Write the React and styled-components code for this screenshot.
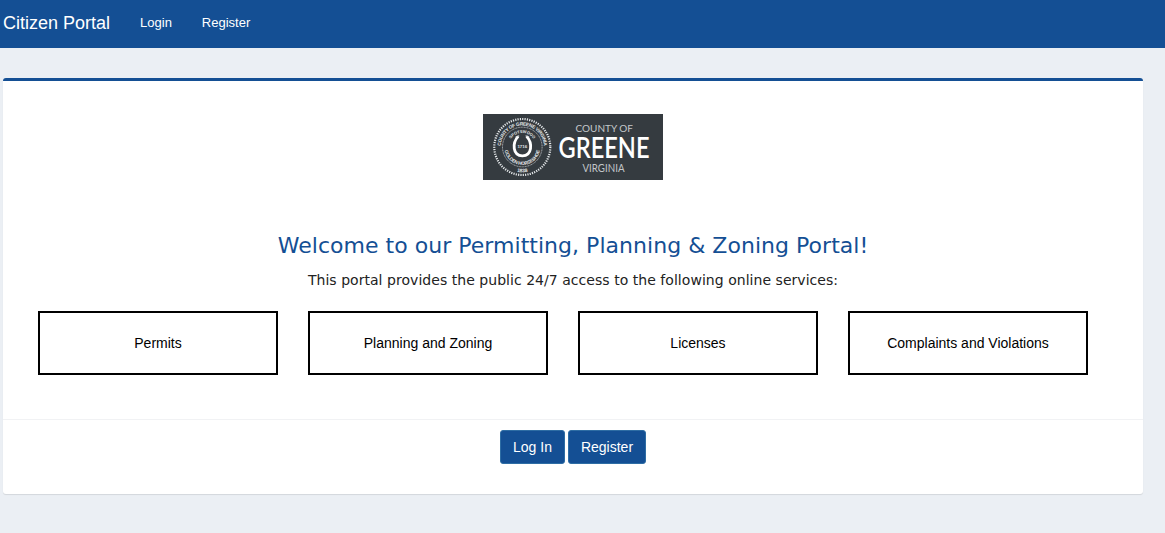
import React from "react";
import styled, { createGlobalStyle } from "styled-components";

const GlobalStyle = createGlobalStyle`
  *, *::before, *::after {
    box-sizing: border-box;
  }
  body {
    margin: 0;
    min-height: 100vh;
    background: #ebeff4;
    color: #000;
    font-family: "Liberation Sans", Arial, sans-serif;
    font-size: 14px;
    line-height: 20px;
  }
`;

const Navbar = styled.nav`
  display: flex;
  align-items: center;
  gap: 30px;
  height: 48px;
  padding: 0 3px 3px;
  background: #144f94;
`;

const Brand = styled.a`
  color: #fff;
  font-size: 18px;
  text-decoration: none;
  white-space: nowrap;
`;

const NavLink = styled.a`
  color: #fff;
  font-size: 13px;
  text-decoration: none;
`;

const Card = styled.main`
  width: 1140px;
  height: 416px;
  margin: 30px 0 0 3px;
  border-top: 3px solid #144f94;
  border-radius: 3px;
  background: #fff;
  box-shadow: 0 1px 1px rgba(0, 0, 0, 0.1);
`;

const CardBody = styled.div`
  display: flex;
  flex-direction: column;
  align-items: center;
  height: 338px;
  padding-top: 33px;
`;

const Logo = styled.svg`
  display: block;
  flex: none;
  width: 180px;
  height: 66px;
  background: #353b40;
`;

const Heading = styled.h1`
  margin: 51px 0 0;
  color: #144f94;
  font-family: Verdana, "DejaVu Sans", sans-serif;
  font-size: 22px;
  font-weight: 400;
  line-height: 30px;
  letter-spacing: 0.03px;
  white-space: nowrap;
`;

const Intro = styled.p`
  margin: 9px 0 0;
  color: #222;
  font-family: Verdana, "DejaVu Sans", sans-serif;
  font-size: 14px;
  letter-spacing: 0.04px;
  white-space: nowrap;
`;

const Services = styled.div`
  display: grid;
  grid-template-columns: repeat(4, 240px);
  gap: 30px;
  align-self: flex-start;
  margin: 21px 0 0 35px;
`;

const Service = styled.div`
  display: flex;
  justify-content: center;
  align-items: center;
  height: 64px;
  border: 2px solid #000;
`;

const CardFooter = styled.footer`
  display: flex;
  justify-content: center;
  gap: 3px;
  padding: 10px 0;
  border-top: 1px solid #f1f2f4;
`;

const Button = styled.button`
  width: ${(props) => props.$width};
  height: 34px;
  padding: 0;
  border: 1px solid #2e6da4;
  border-radius: 3px;
  background: #144f94;
  color: #fff;
  font-family: inherit;
  font-size: 14px;
`;

const services = [
  "Permits",
  "Planning and Zoning",
  "Licenses",
  "Complaints and Violations",
];

const CountyLogo = () => (
  <Logo viewBox="0 0 180 66" role="img" aria-label="County of Greene Virginia">
    <defs>
      <path id="outerTop" d="M17.8 33 A21.5 21.5 0 0 1 60.8 33" />
      <path id="outerBottom" d="M14 33 A25.3 25.3 0 0 0 64.6 33" />
      <path id="innerTop" d="M25.3 33 A14 14 0 0 1 53.3 33" />
      <path id="innerBottom" d="M21.3 33 A18 18 0 0 0 57.3 33" />
    </defs>
    <g fill="none" stroke="#e4e7e9">
      <circle cx="39.3" cy="33" r="28" strokeWidth="2.2" strokeDasharray="1.2 1.15" />
      <circle cx="39.3" cy="33" r="19.8" strokeWidth="0.7" strokeDasharray="1 0.6" />
      <path
        d="M35.2 22.4 C29 29 29.5 41.8 39.4 41.8 C49.3 41.8 49.8 29 43.6 22.4"
        stroke="#fff"
        strokeWidth="2.8"
      />
      <path d="M32.6 23.2 L36.2 21.8 M42.6 21.8 L46.2 23.2" strokeWidth="1.2" />
    </g>
    <g fill="#e4e7e9" fontFamily="Liberation Sans, sans-serif" fontWeight="700" textAnchor="middle">
      <text fontSize="4.8">
        <textPath href="#outerTop" startOffset="50%" textLength="65">COUNTY OF GREENE VIRGINIA</textPath>
      </text>
      <text fontSize="4">
        <textPath href="#innerTop" startOffset="50%">SPOTSWOOD</textPath>
      </text>
      <text fontSize="4.8">
        <textPath href="#innerBottom" startOffset="50%" textLength="49">GOLDEN HORSESHOE</textPath>
      </text>
      <text fontSize="5">
        <textPath href="#outerBottom" startOffset="50%">1838</textPath>
      </text>
      <text x="39.3" y="34.4" fontSize="4.4">1716</text>
    </g>
    <g fontFamily="Lato, sans-serif">
      <text x="92.5" y="17.8" fontSize="10.3" fill="#c3c7ca" textLength="57.5" lengthAdjust="spacingAndGlyphs">COUNTY OF</text>
      <text x="75.5" y="43.8" fontSize="27.8" fontWeight="600" fill="#fff" textLength="91" lengthAdjust="spacingAndGlyphs">GREENE</text>
      <text x="99.5" y="57.8" fontSize="10.8" fill="#c3c7ca" textLength="42" lengthAdjust="spacingAndGlyphs">VIRGINIA</text>
    </g>
  </Logo>
);

const App = () => {
  return (
    <>
      <GlobalStyle />
      <Navbar>
        <Brand href="#">Citizen Portal</Brand>
        <NavLink href="#">Login</NavLink>
        <NavLink href="#">Register</NavLink>
      </Navbar>
      <Card>
        <CardBody>
          <CountyLogo />
          <Heading>
            Welcome to our Permitting, Planning &amp; Zoning Portal!
          </Heading>
          <Intro>
            This portal provides the public 24/7 access to the following online
            services:
          </Intro>
          <Services>
            {services.map((name) => (
              <Service key={name}>{name}</Service>
            ))}
          </Services>
        </CardBody>
        <CardFooter>
          <Button $width="65px">Log In</Button>
          <Button $width="78px">Register</Button>
        </CardFooter>
      </Card>
    </>
  );
};

export default App;
